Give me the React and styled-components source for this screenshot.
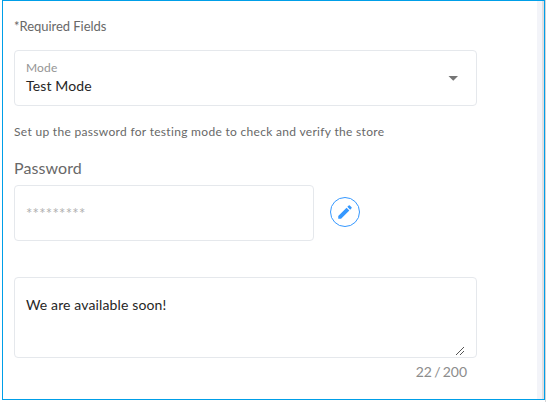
import React from 'react';
import styled, { createGlobalStyle } from 'styled-components';

const GlobalStyle = createGlobalStyle`
  *, *::before, *::after { box-sizing: border-box; }
  body { margin: 0; background: #fff; font-family: Lato, "Liberation Sans", sans-serif; overflow: hidden; }
`;

const Page = styled.div`
  display: flex;
  width: 546px;
  height: 402px;
  padding: 0 0 2px 2px;
  background: linear-gradient(90deg, #fff 545px, #d4d4d6 545px);
`;

const Frame = styled.main`
  display: flex;
  width: 543px;
  height: 400px;
  border: 1px solid #009fe8;
`;

const Form = styled.form`
  display: flex;
  flex-direction: column;
  width: 534px;
  padding: 16px 0 0 11px;
`;

const Gutter = styled.div`
  flex: 1;
  background: #f3f4f9;
  border-right: 2px solid #dfdfe2;
`;

const Note = styled.p`
  margin: 0;
  font-size: ${(p) => p.$size}px;
  line-height: 18px;
  letter-spacing: ${(p) => p.$spacing}px;
  color: #686868;
  white-space: nowrap;
`;

const Box = styled.div`
  display: flex;
  align-items: center;
  justify-content: space-between;
  width: ${(p) => p.$width}px;
  height: 56px;
  padding: 0 18px 0 11px;
  border: 1px solid #e5e8ec;
  border-radius: 4px;
`;

const SelectField = styled(Box)`
  margin: 15px 0 17px;
`;

const FieldText = styled.div`
  display: flex;
  flex-direction: column;
`;

const FloatingLabel = styled.span`
  font-size: 12px;
  line-height: 16px;
  letter-spacing: 0.15px;
  color: #949494;
`;

const Value = styled.span`
  font-size: 14px;
  line-height: 20px;
  letter-spacing: 0.13px;
  color: #262626;
`;

const Arrow = styled.svg`
  width: 10px;
  height: 5px;
  fill: #757575;
`;

const Label = styled.label`
  margin-top: 17px;
  font-size: 16px;
  line-height: 20px;
  letter-spacing: 0.08px;
  color: #686868;
`;

const PasswordRow = styled.div`
  display: flex;
  align-items: center;
  gap: 16px;
  margin: 7px 0 36px;
`;

const Placeholder = styled.span`
  font-size: 15px;
  line-height: 20px;
  letter-spacing: 0.25px;
  color: #b0b0b0;
`;

const EditButton = styled.button`
  display: grid;
  place-items: center;
  width: 30px;
  height: 30px;
  margin-top: -2px;
  padding: 0;
  border: 1px solid #3598ff;
  border-radius: 50%;
  background: #fff;
`;

const Pencil = styled.svg`
  width: 18px;
  height: 18px;
  fill: #3598ff;
`;

const MessageBox = styled.div`
  display: flex;
  justify-content: space-between;
  width: 463px;
  height: 81px;
  padding: 17px 11px 1px;
  border: 1px solid #e5e8ec;
  border-radius: 4px;
`;

const Grip = styled.svg`
  align-self: flex-end;
  width: 10px;
  height: 10px;
  fill: none;
  stroke: #555;
`;

const Counter = styled.div`
  width: 463px;
  padding-right: 10px;
  margin-top: 4px;
  font-size: 14px;
  line-height: 20px;
  letter-spacing: 0;
  word-spacing: -1.4px;
  text-align: right;
  color: #8c8c8c;
`;

export default function App() {
  return (
    <>
      <GlobalStyle />
      <Page>
        <Frame>
          <Form>
            <Note $size={13} $spacing={-0.04}>*Required Fields</Note>
            <SelectField $width={463}>
              <FieldText>
                <FloatingLabel>Mode</FloatingLabel>
                <Value>Test Mode</Value>
              </FieldText>
              <Arrow viewBox="0 0 10 5"><path d="M.5 0h9.5L5.25 4.75z" /></Arrow>
            </SelectField>
            <Note $size={12} $spacing={0.31}>
              Set up the password for testing mode to check and verify the store
            </Note>
            <Label>Password</Label>
            <PasswordRow>
              <Box $width={300}>
                <Placeholder>*********</Placeholder>
              </Box>
              <EditButton type="button" aria-label="Edit password">
                <Pencil viewBox="0 0 24 24">
                  <path d="M3 17.25V21h3.75L17.81 9.94l-3.75-3.75L3 17.25zM20.71 7.04a1 1 0 0 0 0-1.41l-2.34-2.34a1 1 0 0 0-1.41 0l-1.83 1.83 3.75 3.75 1.83-1.83z" />
                </Pencil>
              </EditButton>
            </PasswordRow>
            <MessageBox>
              <Value>We are available soon!</Value>
              <Grip viewBox="0 0 10 10"><path d="M1 9l8-8M5 9l4-4" /></Grip>
            </MessageBox>
            <Counter>22 / 200</Counter>
          </Form>
          <Gutter />
        </Frame>
      </Page>
    </>
  );
}
